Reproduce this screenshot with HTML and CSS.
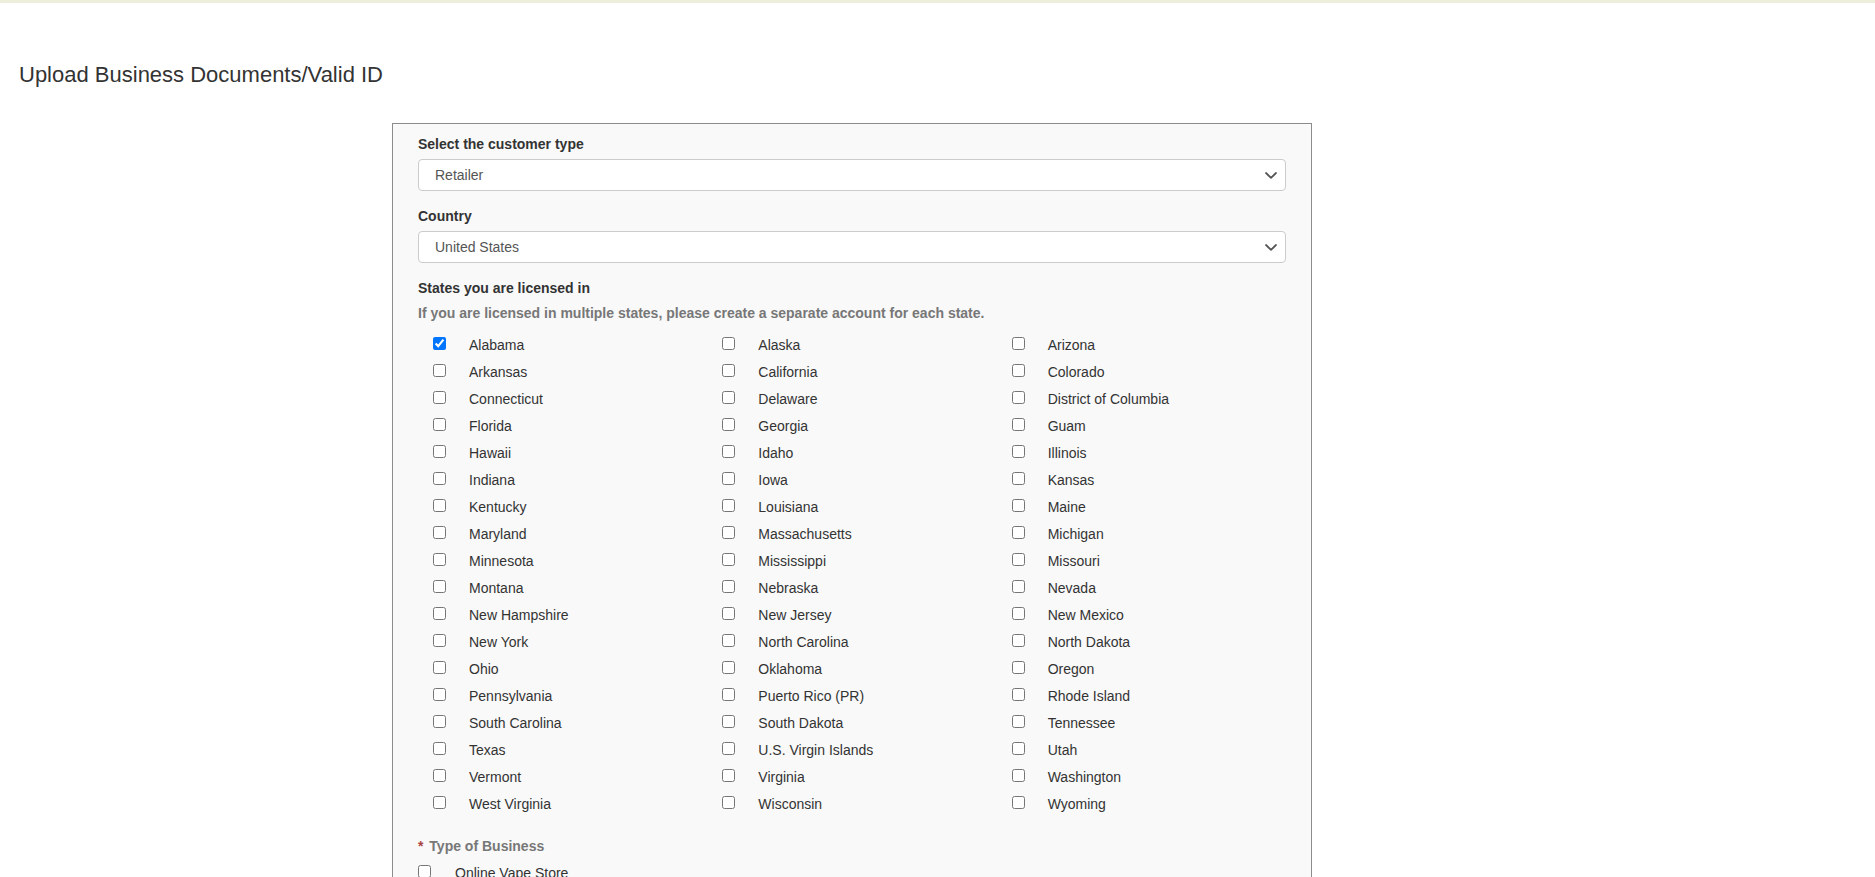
FILE: index.html
```html
<!DOCTYPE html>
<html lang="en">
<head>
<meta charset="utf-8">
<title>Upload Business Documents/Valid ID</title>
<link rel="stylesheet" href="styles.css">
</head>
<body>
<div class="topline"></div>
<h3 class="page-title">Upload Business Documents/Valid ID</h3>
<div class="panel">
  <div class="form-group">
    <label class="field-label">Select the customer type</label>
    <div class="select-box">
      <span class="select-value">Retailer</span>
      <svg class="chevron" width="12" height="7" viewBox="0 0 12 7"><path d="M1 1 L6 5.8 L11 1" fill="none" stroke="#555" stroke-width="1.8" stroke-linecap="round" stroke-linejoin="round"/></svg>
    </div>
  </div>
  <div class="form-group">
    <label class="field-label">Country</label>
    <div class="select-box">
      <span class="select-value">United States</span>
      <svg class="chevron" width="12" height="7" viewBox="0 0 12 7"><path d="M1 1 L6 5.8 L11 1" fill="none" stroke="#555" stroke-width="1.8" stroke-linecap="round" stroke-linejoin="round"/></svg>
    </div>
  </div>
  <div class="form-group states">
    <label class="field-label">States you are licensed in</label>
    <p class="hint">If you are licensed in multiple states, please create a separate account for each state.</p>
    <div class="state-grid">
      <label class="state"><input type="checkbox" checked><span>Alabama</span></label>
      <label class="state"><input type="checkbox"><span>Alaska</span></label>
      <label class="state"><input type="checkbox"><span>Arizona</span></label>
      <label class="state"><input type="checkbox"><span>Arkansas</span></label>
      <label class="state"><input type="checkbox"><span>California</span></label>
      <label class="state"><input type="checkbox"><span>Colorado</span></label>
      <label class="state"><input type="checkbox"><span>Connecticut</span></label>
      <label class="state"><input type="checkbox"><span>Delaware</span></label>
      <label class="state"><input type="checkbox"><span>District of Columbia</span></label>
      <label class="state"><input type="checkbox"><span>Florida</span></label>
      <label class="state"><input type="checkbox"><span>Georgia</span></label>
      <label class="state"><input type="checkbox"><span>Guam</span></label>
      <label class="state"><input type="checkbox"><span>Hawaii</span></label>
      <label class="state"><input type="checkbox"><span>Idaho</span></label>
      <label class="state"><input type="checkbox"><span>Illinois</span></label>
      <label class="state"><input type="checkbox"><span>Indiana</span></label>
      <label class="state"><input type="checkbox"><span>Iowa</span></label>
      <label class="state"><input type="checkbox"><span>Kansas</span></label>
      <label class="state"><input type="checkbox"><span>Kentucky</span></label>
      <label class="state"><input type="checkbox"><span>Louisiana</span></label>
      <label class="state"><input type="checkbox"><span>Maine</span></label>
      <label class="state"><input type="checkbox"><span>Maryland</span></label>
      <label class="state"><input type="checkbox"><span>Massachusetts</span></label>
      <label class="state"><input type="checkbox"><span>Michigan</span></label>
      <label class="state"><input type="checkbox"><span>Minnesota</span></label>
      <label class="state"><input type="checkbox"><span>Mississippi</span></label>
      <label class="state"><input type="checkbox"><span>Missouri</span></label>
      <label class="state"><input type="checkbox"><span>Montana</span></label>
      <label class="state"><input type="checkbox"><span>Nebraska</span></label>
      <label class="state"><input type="checkbox"><span>Nevada</span></label>
      <label class="state"><input type="checkbox"><span>New Hampshire</span></label>
      <label class="state"><input type="checkbox"><span>New Jersey</span></label>
      <label class="state"><input type="checkbox"><span>New Mexico</span></label>
      <label class="state"><input type="checkbox"><span>New York</span></label>
      <label class="state"><input type="checkbox"><span>North Carolina</span></label>
      <label class="state"><input type="checkbox"><span>North Dakota</span></label>
      <label class="state"><input type="checkbox"><span>Ohio</span></label>
      <label class="state"><input type="checkbox"><span>Oklahoma</span></label>
      <label class="state"><input type="checkbox"><span>Oregon</span></label>
      <label class="state"><input type="checkbox"><span>Pennsylvania</span></label>
      <label class="state"><input type="checkbox"><span>Puerto Rico (PR)</span></label>
      <label class="state"><input type="checkbox"><span>Rhode Island</span></label>
      <label class="state"><input type="checkbox"><span>South Carolina</span></label>
      <label class="state"><input type="checkbox"><span>South Dakota</span></label>
      <label class="state"><input type="checkbox"><span>Tennessee</span></label>
      <label class="state"><input type="checkbox"><span>Texas</span></label>
      <label class="state"><input type="checkbox"><span>U.S. Virgin Islands</span></label>
      <label class="state"><input type="checkbox"><span>Utah</span></label>
      <label class="state"><input type="checkbox"><span>Vermont</span></label>
      <label class="state"><input type="checkbox"><span>Virginia</span></label>
      <label class="state"><input type="checkbox"><span>Washington</span></label>
      <label class="state"><input type="checkbox"><span>West Virginia</span></label>
      <label class="state"><input type="checkbox"><span>Wisconsin</span></label>
      <label class="state"><input type="checkbox"><span>Wyoming</span></label>
    </div>
  </div>
  <div class="form-group business">
    <label class="field-label muted"><span class="req">*</span> Type of Business</label>
    <label class="option"><input type="checkbox"><span>Online Vape Store</span></label>
  </div>
</div>
</body>
</html>
```

FILE: styles.css
```css
html, body {
  margin: 0;
  padding: 0;
  background: #ffffff;
}

body {
  font-family: "Liberation Sans", Arial, Helvetica, sans-serif;
  font-size: 14px;
  line-height: 20px;
  color: #333333;
}

.topline {
  height: 3px;
  background: #eeeedd;
}

.page-title {
  margin: 60px 0 36px 19px;
  font-size: 22px;
  line-height: 24px;
  font-weight: 400;
  color: #333333;
}

.panel {
  margin-left: 392px;
  width: 920px;
  box-sizing: border-box;
  border: 1px solid #8c8c8c;
  background: #f9f9f9;
  padding: 10px 25px 30px 25px;
}

.form-group {
  margin-bottom: 15px;
}

.field-label {
  display: block;
  font-weight: 700;
  line-height: 20px;
  margin-bottom: 5px;
  color: #333333;
}

.field-label.muted {
  color: #777777;
}

.req {
  color: #a94442;
  margin-right: 2px;
}

.select-box {
  height: 32px;
  box-sizing: border-box;
  border: 1px solid #cccccc;
  border-radius: 4px;
  background: #ffffff;
  display: flex;
  align-items: center;
  justify-content: space-between;
  padding: 0 8px 0 16px;
  color: #555555;
}

.chevron {
  display: block;
}

.hint {
  margin: 0 0 10px 0;
  font-weight: 700;
  color: #777777;
  line-height: 20px;
}

.state-grid {
  display: grid;
  grid-template-columns: repeat(3, 1fr);
  grid-auto-rows: 27px;
}

.states {
  margin-bottom: 17px;
}

.state,
.option {
  display: flex;
  align-items: flex-start;
  box-sizing: border-box;
  padding-top: 2px;
  font-weight: 400;
  line-height: 20px;
  color: #333333;
  white-space: nowrap;
}

.state input,
.option input {
  width: 13px;
  height: 13px;
  margin: 2px 23px 0 15px;
  flex: none;
}

.option input {
  margin: 2px 24px 0 0;
}
```
